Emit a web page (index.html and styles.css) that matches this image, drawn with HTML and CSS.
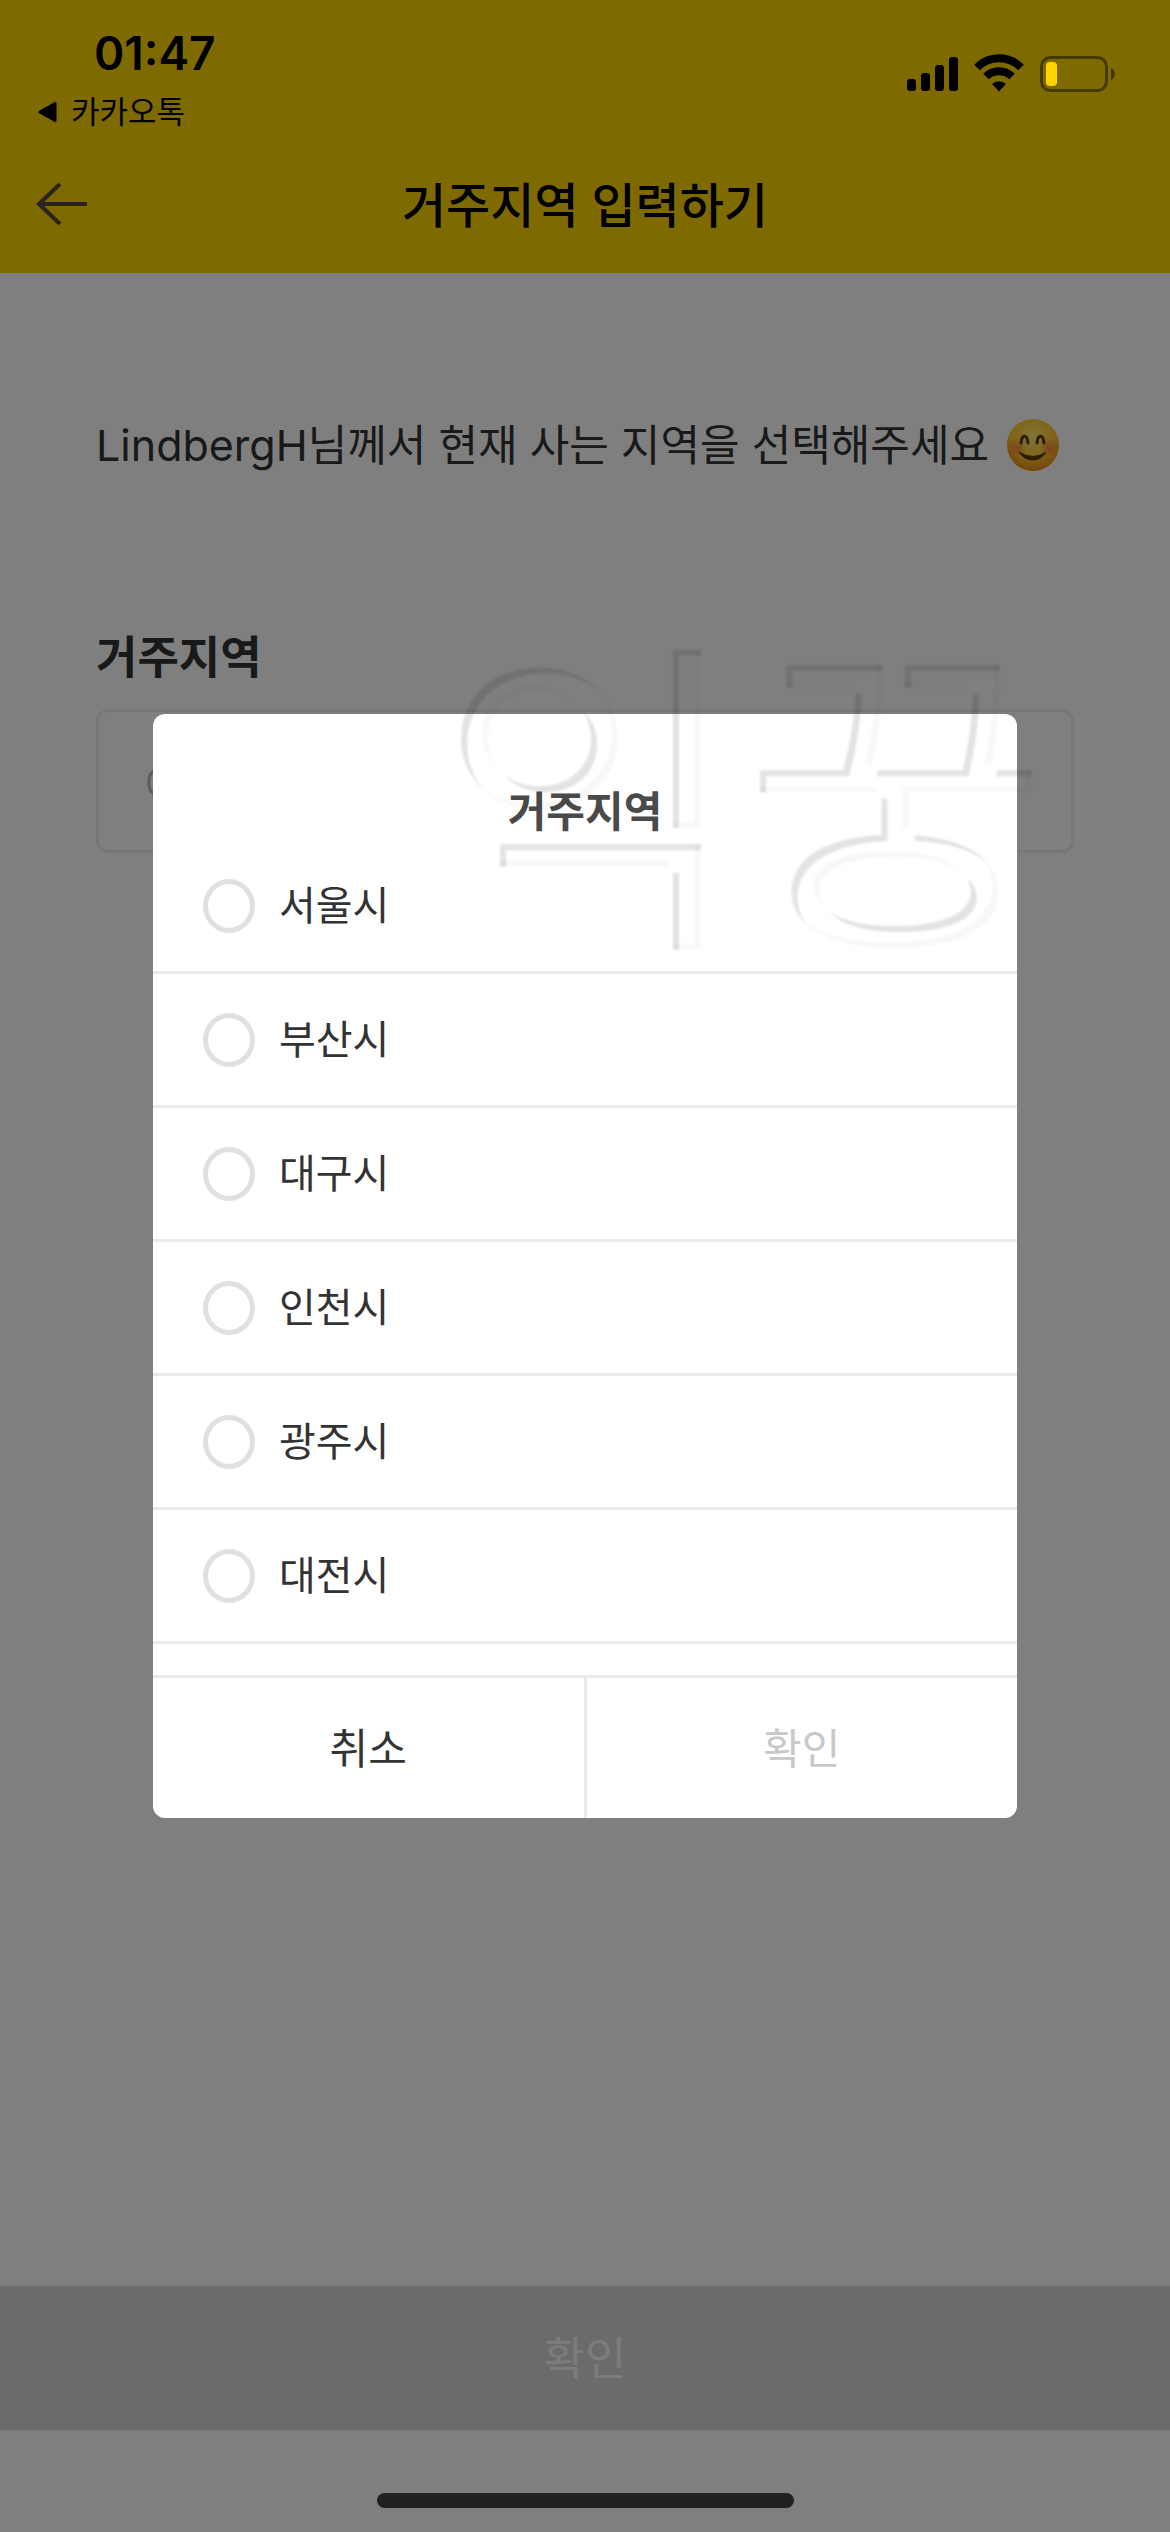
FILE: index.html
```html
<!DOCTYPE html>
<html lang="ko">
<head>
<meta charset="utf-8">
<meta name="viewport" content="width=device-width, initial-scale=1">
<title>거주지역 입력하기</title>
<link rel="stylesheet" href="styles.css">
</head>
<body>
<div class="page">
  <header class="header">
    <div class="status">
      <div class="status-left">
        <time class="clock">01:47</time>
        <a class="return-link" href="#">
          <svg class="return-icon" viewBox="0 0 21 20" aria-hidden="true"><path d="M19 1.500V18.500L4 10Z" fill="#000" stroke="#000" stroke-width="3" stroke-linejoin="round"/></svg>
          카카오톡
        </a>
      </div>
      <svg class="status-icons" viewBox="0 0 210 38" aria-hidden="true">
        <rect x="1" y="25" width="9" height="12" rx="3"/>
        <rect x="15" y="19" width="9" height="18" rx="3"/>
        <rect x="29" y="11" width="9" height="26" rx="3"/>
        <rect x="43" y="3" width="9" height="34" rx="3"/>
        <g fill="none" stroke="#000" stroke-width="8">
          <path d="M71 13.500A31 31 0 0 1 115 13.500"/>
          <path d="M80 22.500A18.500 18.500 0 0 1 106 22.500"/>
        </g>
        <path d="M86 30a10 10 0 0 1 14 0l-7 7.500z"/>
        <rect x="135.500" y="3.500" width="65" height="33" rx="9" fill="none" stroke="#000" stroke-opacity=".45" stroke-width="3"/>
        <rect x="140" y="8" width="11" height="24" rx="4" fill="#ffd400"/>
        <path d="M205 14c5 2 5 10 0 12z" fill-opacity=".5"/>
      </svg>
    </div>
    <div class="navbar">
      <button class="back" type="button" aria-label="뒤로">
        <svg viewBox="0 0 52 44" aria-hidden="true"><path d="M51 22H3M24 2L3 22L24 42" fill="none" stroke="#5a4444" stroke-width="4"/></svg>
      </button>
      <h1 class="title">거주지역 입력하기</h1>
    </div>
  </header>

  <main class="content">
    <p class="greeting">
      <span>LindbergH님께서 현재 사는 지역을 선택해주세요</span>
      <svg class="emoji" viewBox="0 0 52 52" role="img" aria-label="웃는 얼굴">
        <defs>
          <radialGradient id="face" cx=".5" cy=".35" r=".65">
            <stop offset="0" stop-color="#ffe86a"/>
            <stop offset=".6" stop-color="#ffcb30"/>
            <stop offset="1" stop-color="#e88a10"/>
          </radialGradient>
          <radialGradient id="blush">
            <stop offset="0" stop-color="#ff6a3c" stop-opacity=".7"/>
            <stop offset="1" stop-color="#ff6a3c" stop-opacity="0"/>
          </radialGradient>
        </defs>
        <circle cx="26" cy="26" r="26" fill="url(#face)"/>
        <circle cx="10" cy="29" r="10" fill="url(#blush)"/>
        <circle cx="42" cy="29" r="10" fill="url(#blush)"/>
        <g fill="none" stroke="#5a3510" stroke-width="3" stroke-linecap="round">
          <path d="M14 24C15 15 20 15 21 24"/>
          <path d="M30 24C31 15 36 15 37 24"/>
        </g>
        <path d="M12 33Q26 42 39 33Q34 41 26 41Q17 41 12 33Z" fill="#5a3510" stroke="#5a3510" stroke-linejoin="round"/>
      </svg>
    </p>
    <label class="label" for="region">거주지역</label>
    <input class="field" id="region" type="text" placeholder="예) 서울시" readonly>
  </main>

  <button class="submit" type="button" disabled>확인</button>
  <div class="home"><span class="home-bar"></span></div>

  <div class="overlay">
    <form class="dialog" role="dialog" aria-labelledby="dialog-title">
      <h2 class="dialog-title" id="dialog-title">거주지역</h2>
      <div class="options">
        <label class="option"><input class="radio" type="radio" name="city"><span class="option-name">서울시</span></label>
        <label class="option"><input class="radio" type="radio" name="city"><span class="option-name">부산시</span></label>
        <label class="option"><input class="radio" type="radio" name="city"><span class="option-name">대구시</span></label>
        <label class="option"><input class="radio" type="radio" name="city"><span class="option-name">인천시</span></label>
        <label class="option"><input class="radio" type="radio" name="city"><span class="option-name">광주시</span></label>
        <label class="option"><input class="radio" type="radio" name="city"><span class="option-name">대전시</span></label>
      </div>
      <div class="actions">
        <button class="action" type="button">취소</button>
        <button class="action" type="button" disabled>확인</button>
      </div>
    </form>
  </div>

  <svg class="watermark" viewBox="0 0 680 360">
    <filter id="emboss" x="0" y="0" width="1" height="1">
      <feOffset in="SourceAlpha" dx="6" dy="6" result="down"/>
      <feOffset in="SourceAlpha" dx="-6" dy="-6" result="up"/>
      <feComposite in="SourceAlpha" in2="down" operator="out" result="edge"/>
      <feComposite in="SourceAlpha" in2="up" operator="out" result="far"/>
      <feComponentTransfer in="edge" result="dark"><feFuncA type="linear" slope=".11"/></feComponentTransfer>
      <feComponentTransfer in="far" result="light"><feFuncA type="linear" slope=".03"/></feComponentTransfer>
      <feMerge result="both"><feMergeNode in="light"/><feMergeNode in="dark"/></feMerge>
      <feGaussianBlur in="both" stdDeviation="1"/>
    </filter>
    <text x="0" y="284" filter="url(#emboss)">익꿍</text>
  </svg>
</div>
</body>
</html>
```

FILE: styles.css
```css
* {
  box-sizing: border-box;
}

body {
  margin: 0;
  font-family: Inter, "Noto Sans CJK KR", sans-serif;
  color: #333;
  background: #fff;
}

button,
input {
  font: inherit;
  color: inherit;
}

button {
  padding: 0;
  border: 0;
  background: none;
}

.page {
  position: relative;
  display: flex;
  flex-direction: column;
  min-height: 100vh;
}

.header {
  background: #ffd400;
}

/* System chrome stays above the dimmed page */
.status,
.home-bar {
  position: relative;
  z-index: 3;
}

.status {
  display: flex;
  justify-content: space-between;
  align-items: flex-start;
  height: 138px;
  padding: 24px 54px 0 36px;
  color: #000;
}

.status-left {
  display: flex;
  flex-direction: column;
  gap: 12px;
}

.clock {
  padding-left: 58px;
  font-size: 46px;
  font-weight: 600;
  line-height: 58px;
}

.return-link {
  display: flex;
  align-items: center;
  gap: 14px;
  font-size: 31px;
  line-height: 36px;
  color: inherit;
  text-decoration: none;
}

.return-icon {
  width: 21px;
  height: 20px;
}

.status-icons {
  width: 210px;
  height: 38px;
  margin-top: 30px;
}

.navbar {
  display: grid;
  grid-template-columns: 52px 1fr 52px;
  align-items: center;
  height: 135px;
  padding: 0 36px 4px;
}

.back {
  display: flex;
  height: 44px;
}

.title {
  margin: 0;
  padding-top: 4px;
  font-size: 48px;
  font-weight: 500;
  line-height: 72px;
  text-align: center;
  color: #000;
}

.content {
  display: flex;
  flex: 1;
  flex-direction: column;
  padding: 142px 96px 0;
}

.greeting {
  display: flex;
  align-items: center;
  gap: 18px;
  margin: 0 0 152px;
  font-size: 43px;
  line-height: 60px;
  white-space: nowrap;
}

.emoji {
  width: 52px;
  height: 52px;
}

.label {
  margin-bottom: 20px;
  font-size: 45px;
  font-weight: 700;
  line-height: 62px;
}

.field {
  width: 100%;
  height: 144px;
  padding: 6px 46px 0;
  border: 3px solid #efefef;
  border-radius: 12px;
  font-size: 39px;
  background: none;
}

.field::placeholder {
  color: #bbb;
  opacity: 1;
}

.submit {
  height: 144px;
  padding-bottom: 6px;
  font-size: 45px;
  color: #f8f8f8;
  background: #d7d7d7;
}

.home {
  display: flex;
  justify-content: center;
  height: 102px;
  padding-top: 63px;
}

.home-bar {
  width: 417px;
  height: 15px;
  border-radius: 8px;
  background: #212121;
}

.overlay {
  position: absolute;
  inset: 0;
  z-index: 2;
  display: grid;
  align-items: center;
  padding: 0 153px;
  background: rgba(0, 0, 0, 0.5);
}

.dialog {
  overflow: hidden;
  border-radius: 12px;
  background: #fff;
}

.dialog-title {
  margin: 0;
  padding-top: 70px;
  font-size: 42px;
  font-weight: 700;
  line-height: 56px;
  text-align: center;
  color: #4a4a4a;
}

.options {
  padding-bottom: 31px;
}

.option {
  display: flex;
  align-items: center;
  gap: 24px;
  height: 134px;
  padding: 0 50px;
  border-bottom: 3px solid #ebebeb;
  font-size: 40px;
}

.option-name {
  padding-bottom: 6px;
}

.radio {
  appearance: none;
  width: 52px;
  height: 54px;
  margin: 0;
  border: 5px solid #e0e0e0;
  border-radius: 50%;
}

.actions {
  display: flex;
  border-top: 3px solid #ebebeb;
}

.action {
  flex: 1;
  height: 140px;
  padding-bottom: 6px;
  font-size: 42px;
}

.action + .action {
  border-left: 3px solid #ebebeb;
}

.action:disabled {
  color: #c8c8c8;
}

/* Embossed mark floating over page and dialog */
.watermark {
  position: absolute;
  top: 640px;
  right: 52px;
  z-index: 4;
  width: 680px;
  height: 360px;
  font-family: "Noto Sans CJK KR", sans-serif;
  font-size: 332px;
  pointer-events: none;
}
```
